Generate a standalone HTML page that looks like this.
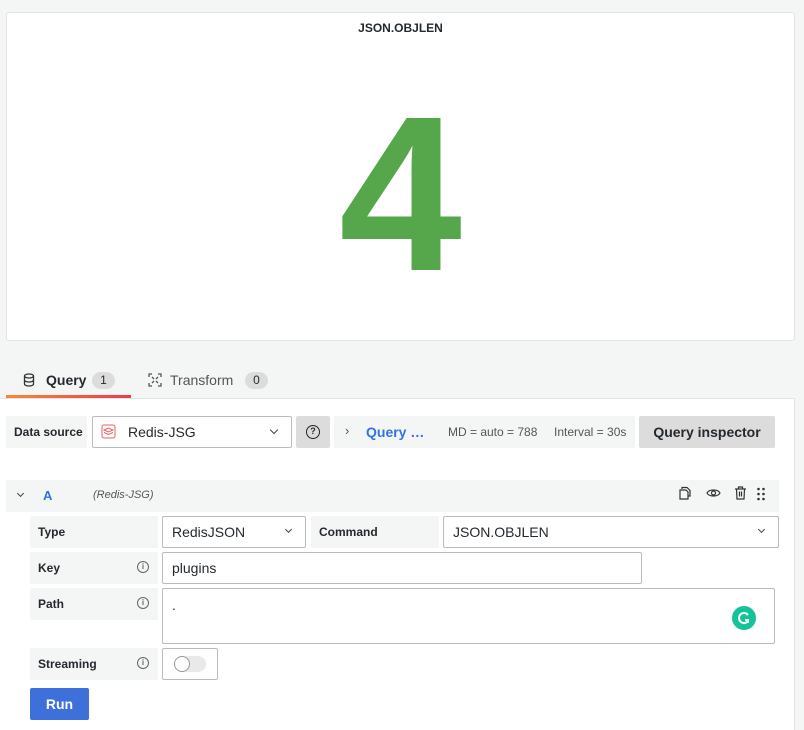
<!DOCTYPE html>
<html><head><style>
*{box-sizing:border-box;margin:0;padding:0}
body{width:804px;height:730px;background:#f4f5f5;font-family:"Liberation Sans",sans-serif;position:relative;overflow:hidden;color:#24292e}
.a{position:absolute}
.lbl{background:#f4f5f5;font-weight:bold;font-size:12px;display:flex;align-items:center;padding-left:8px;border-radius:2px}
.inp{background:#fff;border:1px solid #bbb;border-radius:2px;font-size:14px;display:flex;align-items:center;padding-left:9px}
.info{position:absolute;right:9px;top:9px;width:12px;height:12px;border:1.3px solid #666;border-radius:50%;font-size:8px;text-align:center;line-height:9px;color:#666;font-weight:bold}
.chev{position:absolute;width:6px;height:6px;border-right:1.3px solid #444;border-bottom:1.3px solid #444;transform:rotate(45deg)}
</style></head><body>
<div class="a" style="left:6px;top:12px;width:789px;height:329px;background:#fff;border:1px solid #e2e3e4;border-radius:3px"></div>
<div class="a" style="left:6px;top:21px;width:789px;text-align:center;font-weight:bold;font-size:12px">JSON.OBJLEN</div>
<div class="a" style="left:6px;top:83px;width:789px;text-align:center;font-size:221px;line-height:221px;font-weight:bold;color:#56a64b">4</div>

<svg class="a" style="left:22px;top:373px" width="14" height="14" viewBox="0 0 14 14" fill="none" stroke="#333" stroke-width="1.3"><ellipse cx="7" cy="3" rx="4.5" ry="2"/><path d="M2.5 3v8c0 1.1 2 2 4.5 2s4.5-.9 4.5-2V3M2.5 7c0 1.1 2 2 4.5 2s4.5-.9 4.5-2"/></svg>
<div class="a" style="left:46px;top:372px;font-size:14px;font-weight:bold">Query</div>
<div class="a" style="left:92px;top:372px;width:23px;height:17px;border-radius:9px;background:#dcdcdc;font-size:12px;text-align:center;line-height:17px">1</div>
<svg class="a" style="left:148px;top:373px" width="14" height="14" viewBox="0 0 14 14" fill="none" stroke="#555" stroke-width="1.3"><path d="M1 4V1h3M10 1h3v3M13 10v3h-3M4 13H1v-3M4 4l2 2M10 4l-2 2M4 10l2-2M10 10l-2-2"/></svg>
<div class="a" style="left:170px;top:372px;font-size:14px;color:#555">Transform</div>
<div class="a" style="left:245px;top:372px;width:23px;height:17px;border-radius:9px;background:#dcdcdc;font-size:12px;text-align:center;line-height:17px">0</div>
<div class="a" style="left:6px;top:395px;width:125px;height:3px;background:linear-gradient(90deg,#f6873b,#f0394a)"></div>

<div class="a" style="left:0;top:398px;width:795px;height:332px;background:#fff;border-top:1px solid #e2e3e4;border-right:1px solid #e2e3e4"></div>

<div class="a lbl" style="left:6px;top:416px;width:81px;height:32px">Data source</div>
<div class="a inp" style="left:92px;top:416px;width:200px;height:32px;padding-left:35px">Redis-JSG</div>
<svg class="a" style="left:101px;top:424px" width="15" height="15" viewBox="0 0 15 15" fill="none" stroke="#e56060" stroke-width="1"><rect x="1" y="1" width="13" height="13" rx="2"/><path d="M3 6l4.5-2 4.5 2-4.5 2zM3 8.5l4.5 2 4.5-2"/></svg>
<div class="chev" style="left:271px;top:427px"></div>
<div class="a" style="left:296px;top:416px;width:34px;height:32px;background:#dcdcdc;border-radius:2px"></div>
<div class="a" style="left:306px;top:425px;width:14px;height:14px;border:1.5px solid #222;border-radius:50%;font-size:9px;font-weight:bold;text-align:center;line-height:11px">?</div>
<div class="a" style="left:334px;top:416px;width:301px;height:32px;background:#f4f5f5"></div>
<div class="a" style="left:345px;top:423px;font-size:13px;color:#555">›</div>
<div class="a" style="left:366px;top:424px;font-size:14px;font-weight:bold;color:#3273e0">Query …</div>
<div class="a" style="left:448px;top:425px;font-size:12px;color:#555">MD = auto = 788</div>
<div class="a" style="left:554px;top:425px;font-size:12px;color:#555">Interval = 30s</div>
<div class="a" style="left:639px;top:416px;width:136px;height:32px;background:#dcdcdc;border-radius:2px;font-size:14px;font-weight:bold;text-align:center;line-height:32px">Query inspector</div>

<div class="a" style="left:6px;top:480px;width:773px;height:32px;background:#f4f5f5"></div>
<div class="chev" style="left:18px;top:491px;width:5px;height:5px"></div>
<div class="a" style="left:43px;top:488px;font-size:13px;font-weight:bold;color:#3273e0">A</div>
<div class="a" style="left:93px;top:489px;font-size:11px;font-style:italic;color:#555">(Redis-JSG)</div>
<svg class="a" style="left:678px;top:486px" width="14" height="14" viewBox="0 0 14 14" fill="none" stroke="#333" stroke-width="1.2"><path d="M4 3V1.5h5l3 3V10h-2"/><path d="M2 4h6l2 2v7H2z"/></svg>
<svg class="a" style="left:706px;top:488px" width="15" height="10" viewBox="0 0 15 10" fill="none" stroke="#333" stroke-width="1.2"><path d="M1 5c2-4 11-4 13 0c-2 4-11 4-13 0z"/><circle cx="7.5" cy="5" r="2"/></svg>
<svg class="a" style="left:734px;top:486px" width="13" height="14" viewBox="0 0 13 14" fill="none" stroke="#333" stroke-width="1.2"><path d="M1 3h11M4.5 3V1h4v2M2.5 3l.5 10h7l.5-10M5.5 5.5v5M7.5 5.5v5"/></svg>
<svg class="a" style="left:757px;top:487px" width="8" height="14" viewBox="0 0 8 14" fill="#333"><circle cx="1.5" cy="2" r="1.3"/><circle cx="6.5" cy="2" r="1.3"/><circle cx="1.5" cy="7" r="1.3"/><circle cx="6.5" cy="7" r="1.3"/><circle cx="1.5" cy="12" r="1.3"/><circle cx="6.5" cy="12" r="1.3"/></svg>

<div class="a lbl" style="left:30px;top:516px;width:128px;height:32px">Type</div>
<div class="a inp" style="left:162px;top:516px;width:144px;height:32px">RedisJSON</div>
<div class="chev" style="left:286px;top:527px;width:5px;height:5px"></div>
<div class="a lbl" style="left:311px;top:516px;width:128px;height:32px">Command</div>
<div class="a inp" style="left:443px;top:516px;width:336px;height:32px">JSON.OBJLEN</div>
<div class="chev" style="left:759px;top:527px;width:5px;height:5px"></div>

<div class="a lbl" style="left:30px;top:552px;width:128px;height:32px">Key<div class="info">i</div></div>
<div class="a inp" style="left:162px;top:552px;width:480px;height:32px">plugins</div>

<div class="a lbl" style="left:30px;top:588px;width:128px;height:32px">Path<div class="info">i</div></div>
<div class="a inp" style="left:162px;top:588px;width:613px;height:56px;align-items:flex-start;padding-top:8px">.</div>
<div class="a" style="left:732px;top:606px;width:24px;height:24px;border-radius:50%;background:#15c39a"></div>
<svg class="a" style="left:736px;top:610px" width="16" height="16" viewBox="0 0 16 16" fill="none" stroke="#fff" stroke-width="2"><path d="M12 5a5 5 0 1 0 0 6M9 10h3v3"/></svg>

<div class="a lbl" style="left:30px;top:648px;width:128px;height:32px">Streaming<div class="info">i</div></div>
<div class="a" style="left:162px;top:648px;width:56px;height:32px;background:#fff;border:1px solid #bbb;border-radius:2px"></div>
<div class="a" style="left:174px;top:656px;width:32px;height:16px;border-radius:8px;background:#e9e9e9"></div>
<div class="a" style="left:174px;top:656px;width:16px;height:16px;border-radius:50%;background:#fff;border:1px solid #999"></div>

<div class="a" style="left:30px;top:688px;width:59px;height:32px;background:#3d71d9;border-radius:2px;color:#fff;font-weight:bold;font-size:14px;text-align:center;line-height:32px">Run</div>
</body></html>
